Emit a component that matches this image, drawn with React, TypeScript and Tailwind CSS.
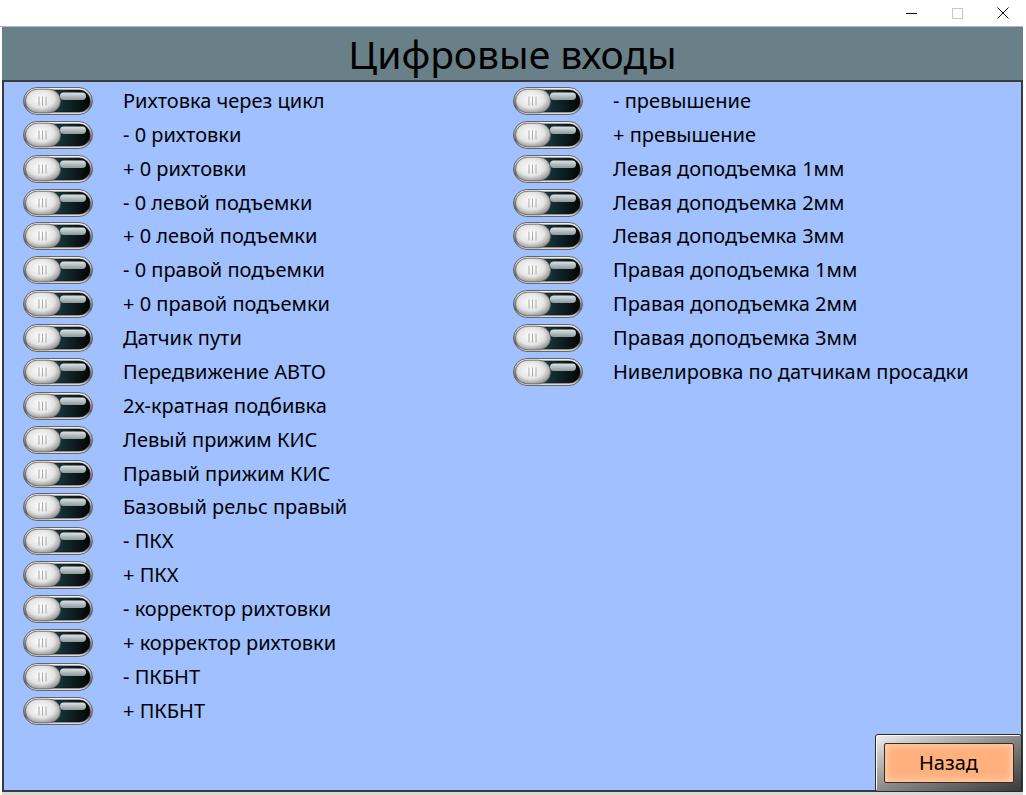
import React from "react";

const left = [
  "Рихтовка через цикл",
  "- 0 рихтовки",
  "+ 0 рихтовки",
  "- 0 левой подъемки",
  "+ 0 левой подъемки",
  "- 0 правой подъемки",
  "+ 0 правой подъемки",
  "Датчик пути",
  "Передвижение АВТО",
  "2х-кратная подбивка",
  "Левый прижим КИС",
  "Правый прижим КИС",
  "Базовый рельс правый",
  "- ПКХ",
  "+ ПКХ",
  "- корректор рихтовки",
  "+ корректор рихтовки",
  "- ПКБНТ",
  "+ ПКБНТ",
];

const right = [
  "- превышение",
  "+ превышение",
  "Левая доподъемка 1мм",
  "Левая доподъемка 2мм",
  "Левая доподъемка 3мм",
  "Правая доподъемка 1мм",
  "Правая доподъемка 2мм",
  "Правая доподъемка 3мм",
  "Нивелировка по датчикам просадки",
];

function Toggle() {
  return (
    <svg width="70" height="28" viewBox="0 0 70 28" className="shrink-0">
      <defs>
        <linearGradient id="ring" x1="0" y1="0" x2="0" y2="1">
          <stop offset="0" stopColor="#f6f6f6" />
          <stop offset="0.4" stopColor="#a8a8a8" />
          <stop offset="0.7" stopColor="#5e5e5e" />
          <stop offset="1" stopColor="#ececec" />
        </linearGradient>
        <linearGradient id="track" x1="0" y1="0" x2="1" y2="0">
          <stop offset="0" stopColor="#3a6a76" />
          <stop offset="0.4" stopColor="#1c3d45" />
          <stop offset="1" stopColor="#030505" />
        </linearGradient>
        <linearGradient id="hl" x1="0" y1="0" x2="0" y2="1">
          <stop offset="0" stopColor="#dfe4e6" />
          <stop offset="1" stopColor="#8a989c" />
        </linearGradient>
        <radialGradient id="knob" cx="0.45" cy="0.42" r="0.62">
          <stop offset="0" stopColor="#ffffff" />
          <stop offset="0.6" stopColor="#e4e4e4" />
          <stop offset="1" stopColor="#909090" />
        </radialGradient>
      </defs>
      <rect x="0.5" y="0.5" width="69" height="27" rx="13.5" fill="url(#ring)" stroke="#666" />
      <rect x="3" y="3" width="64" height="22" rx="11" fill="url(#track)" stroke="#111" strokeWidth="0.6" />
      <rect x="37" y="5.5" width="26" height="7.5" rx="3.7" fill="url(#hl)" />
      <rect x="2.5" y="2.2" width="35" height="23.6" rx="11.8" fill="url(#knob)" stroke="#6a6a6a" strokeWidth="0.8" />
      <line x1="16" y1="9.5" x2="16" y2="18.5" stroke="#a8a8a8" strokeWidth="1" />
      <line x1="19.5" y1="9.5" x2="19.5" y2="18.5" stroke="#a8a8a8" strokeWidth="1" />
      <line x1="23" y1="9.5" x2="23" y2="18.5" stroke="#a8a8a8" strokeWidth="1" />
    </svg>
  );
}

function Row({ label }: { label: string }) {
  return (
    <div className="flex h-[33.89px] items-center">
      <Toggle />
      <span className="ml-[30px] whitespace-nowrap text-[20px] leading-none text-black">{label}</span>
    </div>
  );
}

export default function App() {
  return (
    <div
      className="relative flex h-[795px] w-[1026px] flex-col overflow-hidden bg-white"
      style={{ fontFamily: '"Noto Sans", "Open Sans", sans-serif' }}
    >
      {/* title bar */}
      <div className="flex h-[26px] items-center justify-end bg-white">
        <div className="flex h-full w-[46px] items-center justify-center">
          <div className="h-px w-[11px] bg-black" />
        </div>
        <div className="flex h-full w-[46px] items-center justify-center">
          <div className="h-[11px] w-[11px] border border-[#c8c8c8]" />
        </div>
        <div className="flex h-full w-[46px] items-center justify-center">
          <svg width="12" height="12" viewBox="0 0 12 12">
            <path d="M0.5 0.5 L11.5 11.5 M11.5 0.5 L0.5 11.5" stroke="#111" strokeWidth="1" />
          </svg>
        </div>
      </div>
      <div className="h-px w-[1023px] bg-[#9fb6e6]" />
      {/* frame */}
      <div className="ml-[2px] flex w-[1021px] flex-1 flex-col">
        <div className="flex h-[53px] items-center justify-center bg-[#6a8088]">
          <span className="text-[39px] leading-none text-black">Цифровые входы</span>
        </div>
        <div className="flex flex-1 flex-col border-2 border-[#3a3a3a] bg-[#a0c0ff] pb-[2px]">
          <div className="flex pl-[19px] pt-[2px]">
            <div className="flex w-[490px] flex-col">
              {left.map((l) => (
                <Row key={l} label={l} />
              ))}
            </div>
            <div className="flex flex-col">
              {right.map((l) => (
                <Row key={l} label={l} />
              ))}
            </div>
          </div>
        </div>
        <div className="h-[3px] bg-[#d8d8d8]" />
      </div>
      {/* back button */}
      <div className="absolute left-[875px] top-[734px] flex h-[58px] w-[147px] items-center justify-center rounded-[3px] border border-[#2a2a2a] bg-gradient-to-br from-[#f0f0f0] via-[#8a8a8a] to-[#3a3a3a] shadow-[inset_1px_1px_0_#fff]">
        <div className="flex h-[40px] w-[130px] items-center justify-center rounded-[2px] border border-[#3a2a20] bg-[#ffb07c] shadow-[inset_0_0_6px_3px_#ffc9a4]">
          <span className="text-[20px] leading-none text-black">Назад</span>
        </div>
      </div>
    </div>
  );
}
